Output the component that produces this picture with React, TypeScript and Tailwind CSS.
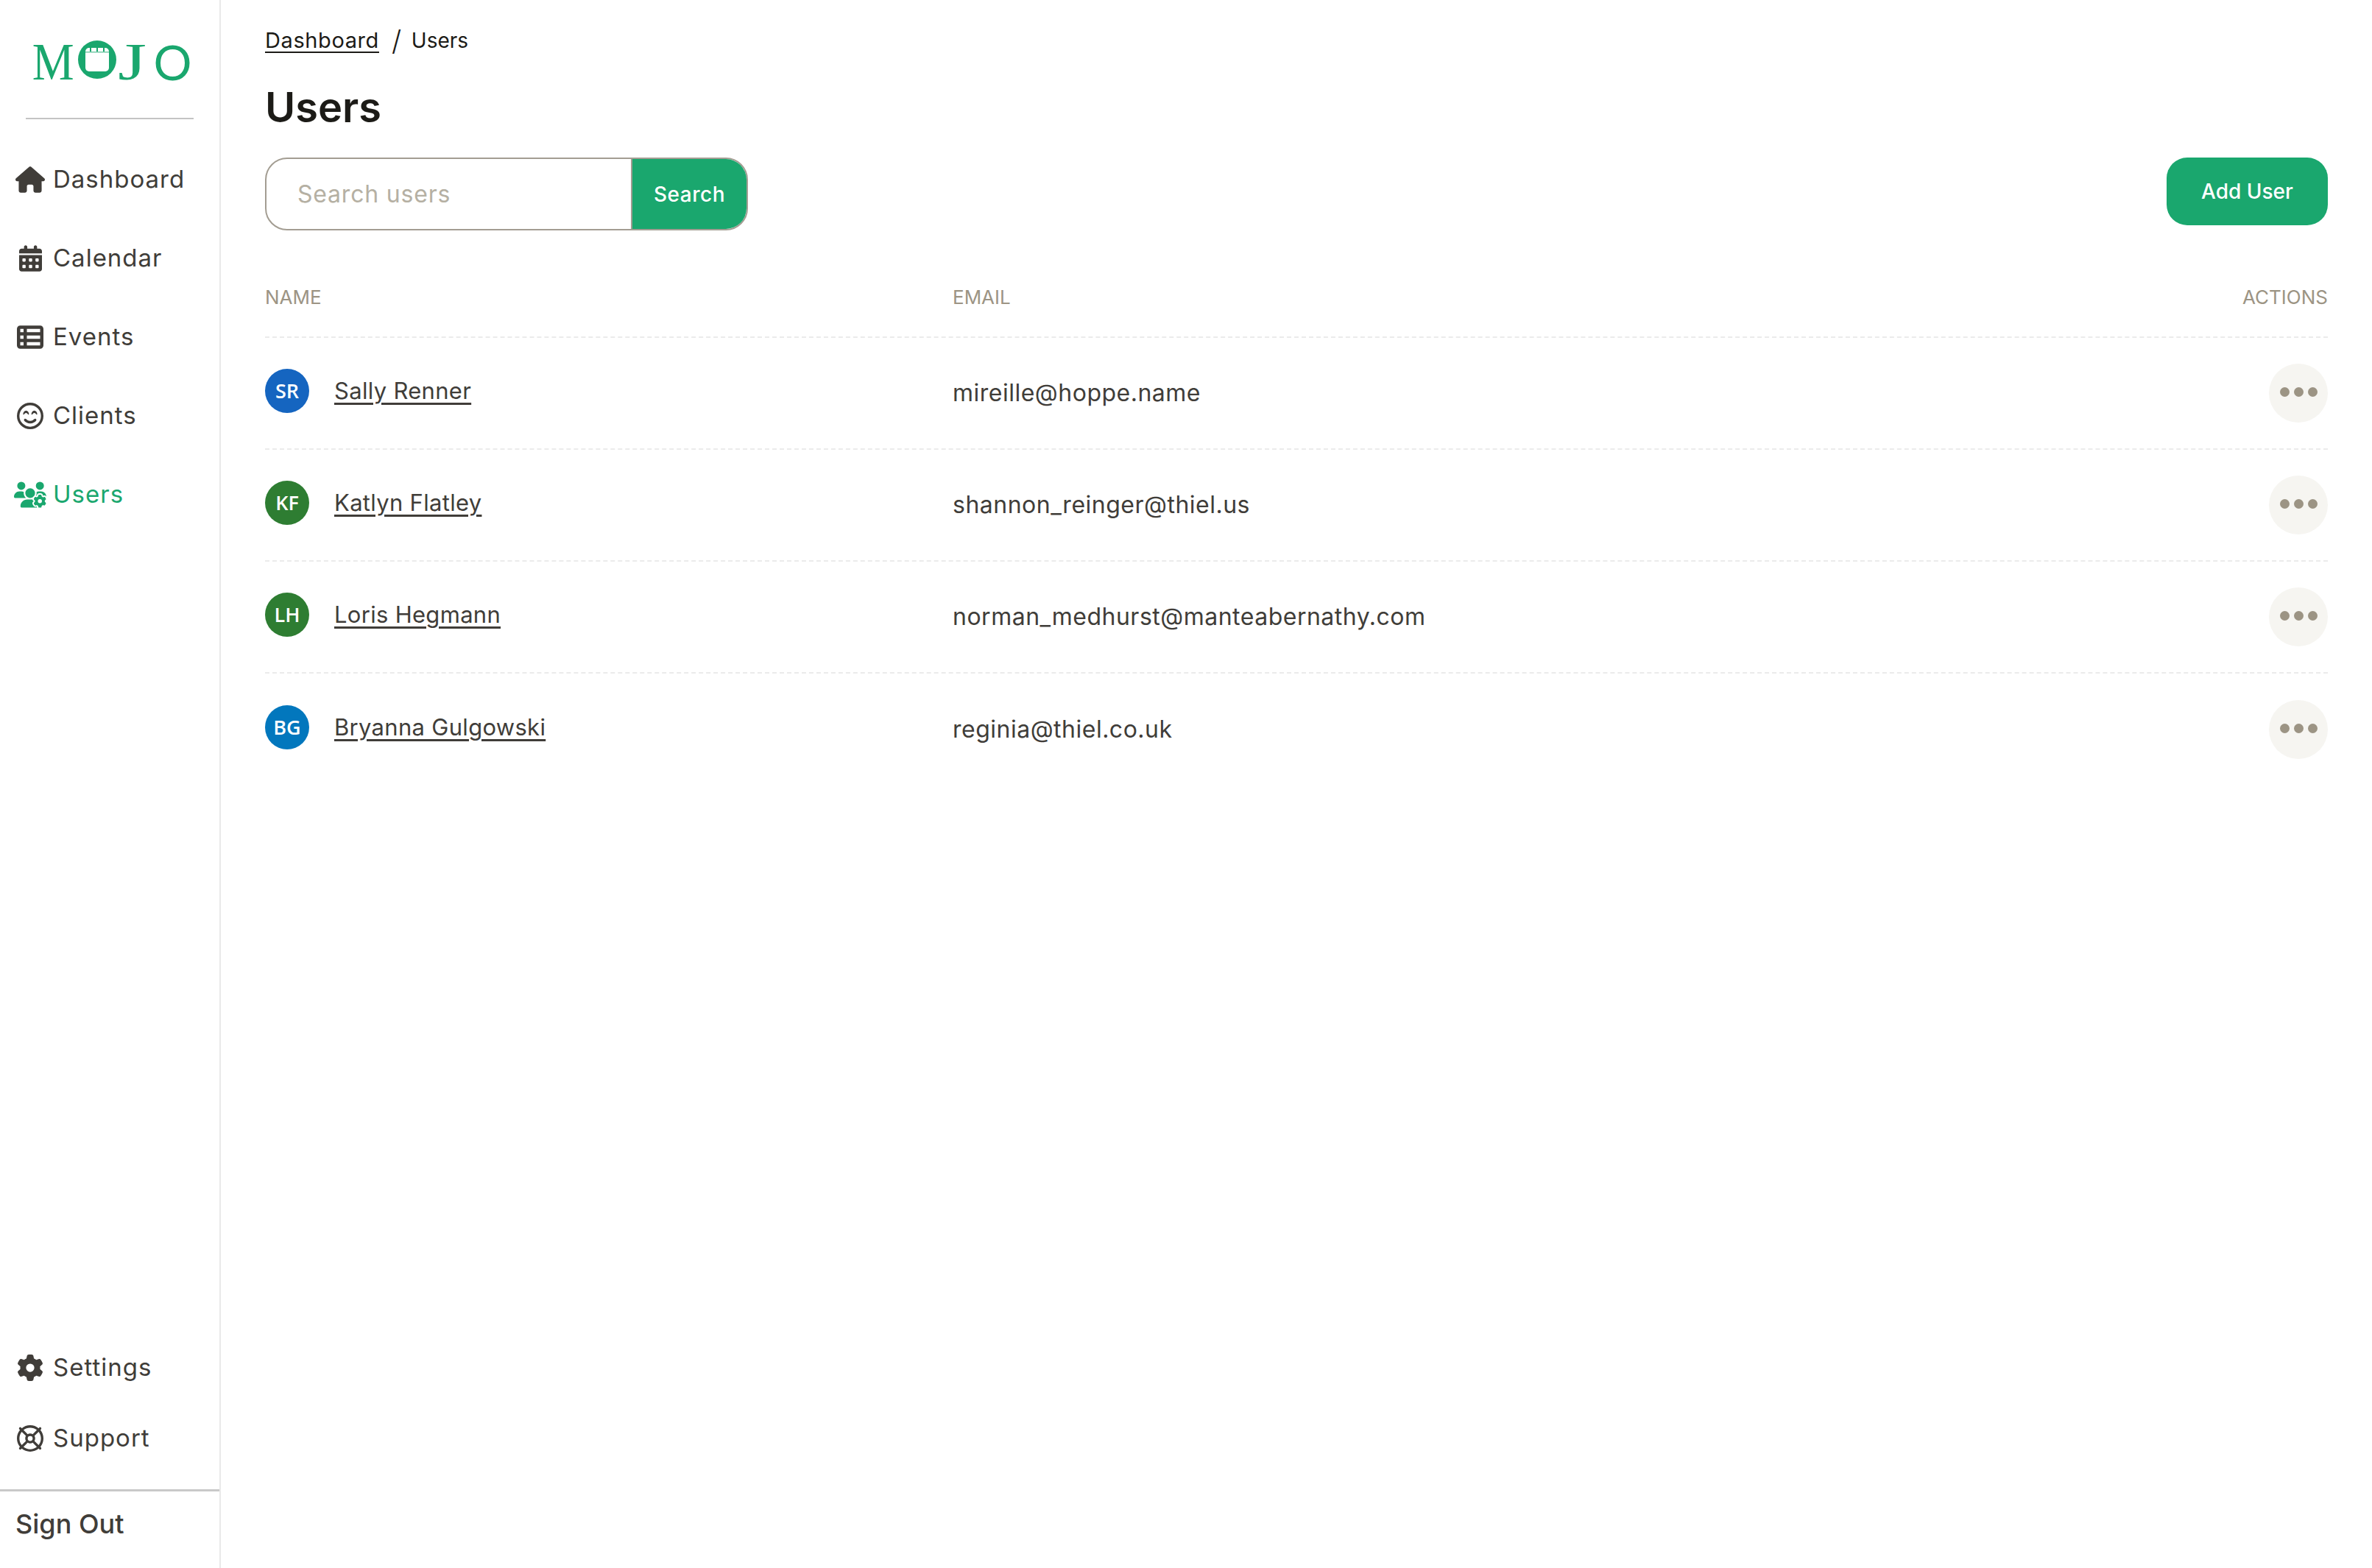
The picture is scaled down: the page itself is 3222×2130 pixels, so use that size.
import { FaHouse, FaCalendarDays, FaTableList, FaRegFaceSmileBeam, FaUsersGear, FaGear, FaRegLifeRing } from 'react-icons/fa6';
import type { IconType } from 'react-icons';

interface NavItemProps {
  icon: IconType;
  label: string;
  active?: boolean;
  rowClass: string;
  iconClass: string;
}

function NavItem({ icon: Icon, label, active, rowClass, iconClass }: NavItemProps) {
  return (
    <div className={`flex items-center ${rowClass} ${active ? 'text-[#1aa76e]' : 'text-[#403d39]'}`}>
      <div className="w-[80px] pl-[10px] pr-[8px] flex justify-center shrink-0">
        <Icon className={iconClass} />
      </div>
      <span className="-ml-[8px] text-[33px] tracking-[1px]">{label}</span>
    </div>
  );
}

function Logo() {
  return (
    <div className="h-[160px] flex items-center pl-[41px] pt-[8px] text-[#1aa76e] font-['Liberation_Serif',serif] text-[71px] leading-none">
      <span className="inline-block w-[53px] text-center scale-x-[0.9]">M</span>
      <svg viewBox="0 0 52 52" className="w-[52px] h-[52px] ml-[12px] mr-[3px] -mt-[6px]">
        <circle cx="26" cy="26" r="26" fill="#1aa76e" />
        <rect x="10" y="10" width="32" height="32" rx="5" fill="#fff" />
        <rect x="10" y="15" width="32" height="1.5" fill="#1aa76e" opacity="0.6" />
        <path d="M17 10v5M26 10v5M35 10v5" stroke="#1aa76e" strokeWidth="2" />
      </svg>
      <span className="inline-block w-[37px] text-center scale-x-[1.4]">J</span>
      <span className="inline-block w-[53px] ml-[10px] text-center font-['Lato',sans-serif] text-[65px]">O</span>
    </div>
  );
}

const users = [
  { initials: 'SR', name: 'Sally Renner', email: 'mireille@hoppe.name', color: 'bg-[#1565c0]' },
  { initials: 'KF', name: 'Katlyn Flatley', email: 'shannon_reinger@thiel.us', color: 'bg-[#2e7d32]' },
  { initials: 'LH', name: 'Loris Hegmann', email: 'norman_medhurst@manteabernathy.com', color: 'bg-[#2e7d32]' },
  { initials: 'BG', name: 'Bryanna Gulgowski', email: 'reginia@thiel.co.uk', color: 'bg-[#0277bd]' },
];

export default function App() {
  return (
    <div className="flex min-h-screen bg-white font-['Inter',sans-serif] text-[#403d39]">
      <aside className="w-[300px] shrink-0 border-r-2 border-[#e9e9e9] flex flex-col">
        <Logo />
        <div className="mx-[35px] h-[2px] bg-[#c4c4c4] mb-[28px]" />
        <NavItem icon={FaHouse} label="Dashboard" rowClass="h-[107px]" iconClass="w-[40px] h-[36px]" />
        <NavItem icon={FaCalendarDays} label="Calendar" rowClass="h-[107px]" iconClass="w-[31px] h-[36px]" />
        <NavItem icon={FaTableList} label="Events" rowClass="h-[107px]" iconClass="w-[36px] h-[36px]" />
        <NavItem icon={FaRegFaceSmileBeam} label="Clients" rowClass="h-[107px]" iconClass="w-[36px] h-[36px]" />
        <NavItem icon={FaUsersGear} label="Users" rowClass="h-[107px]" active iconClass="w-[44px] h-[36px]" />
        <div className="flex-1" />
        <NavItem icon={FaGear} label="Settings" rowClass="h-[96px]" iconClass="w-[36px] h-[36px]" />
        <NavItem icon={FaRegLifeRing} label="Support" rowClass="h-[96px]" iconClass="w-[36px] h-[36px]" />
        <div className="mt-[21px] h-[3px] bg-[#c9c9c9]" />
        <div className="h-[104px] pb-[16px] pl-[21px] flex items-center text-[36px] font-medium">Sign Out</div>
      </aside>

      <main className="flex-1 px-[60px] flex flex-col">
        <div className="h-[110px] flex items-center text-[29px] tracking-[0.6px] text-[#1c1b17]">
          <a className="underline underline-offset-[5px]">Dashboard</a>
          <span className="ml-[17px] mr-[13px] text-[38px] font-light">/</span>
          <span className="text-[28px] tracking-normal">Users</span>
        </div>
        <h1 className="text-[56px] font-semibold leading-none text-[#1c1b17] h-[104px] pt-[8px]">Users</h1>

        <div className="flex items-start justify-between">
          <div className="flex w-[656px] h-[99px] border-2 border-[#a39d92] rounded-[30px] overflow-hidden">
            <input placeholder="Search users" className="flex-1 min-w-0 pl-[42px] text-[32px] tracking-[0.8px] outline-none placeholder:text-[#b5b0a3]" />
            <button className="w-[157px] border-l-2 border-[#a39d92] bg-[#1aa76e] text-white text-[28px] tracking-[0.5px] font-medium">Search</button>
          </div>
          <button className="w-[219px] h-[92px] rounded-[28px] bg-[#1aa76e] text-white text-[28px] font-medium">Add User</button>
        </div>

        <div className="grid grid-cols-[934px_1fr_auto] h-[146px] items-end text-[26px] text-[#9c9484] border-b-2 border-dashed border-[#ebebeb] pb-[34px]">
          <span>NAME</span>
          <span>EMAIL</span>
          <span>ACTIONS</span>
        </div>

        {users.map((user, i) => (
          <div key={user.email} className={`grid grid-cols-[934px_1fr_auto] h-[152px] items-center ${i < users.length - 1 ? 'border-b-2 border-dashed border-[#ebebeb]' : ''}`}>
            <div className="flex items-center gap-[34px] pb-[6px]">
              <div className={`w-[60px] h-[60px] rounded-full flex items-center justify-center text-white text-[27px] font-['Open_Sans',sans-serif] font-semibold ${user.color}`}>
                {user.initials}
              </div>
              <a className="underline underline-offset-[5px] text-[31px] tracking-[0.3px]">{user.name}</a>
            </div>
            <span className="text-[32px] tracking-[0.5px]">{user.email}</span>
            <button className="w-[80px] h-[80px] rounded-full bg-[#f6f5f1] flex items-center justify-center gap-[6px] pb-[3px]">
              <span className="w-[13px] h-[13px] rounded-full bg-[#9c9484]" />
              <span className="w-[13px] h-[13px] rounded-full bg-[#9c9484]" />
              <span className="w-[13px] h-[13px] rounded-full bg-[#9c9484]" />
            </button>
          </div>
        ))}
      </main>
    </div>
  );
}
